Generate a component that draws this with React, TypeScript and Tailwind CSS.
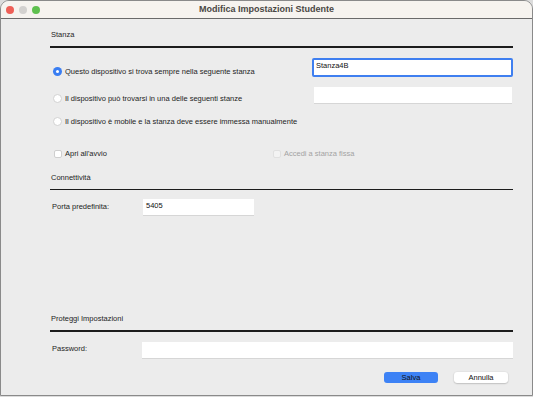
function Radio({ checked }: { checked?: boolean }) {
  return checked ? (
    <span className="flex h-[9px] w-[9px] shrink-0 items-center justify-center rounded-full bg-[#3a7ef2]">
      <span className="h-[3px] w-[3px] rounded-full bg-white" />
    </span>
  ) : (
    <span className="h-[9px] w-[9px] shrink-0 rounded-full border border-[#d2d2d2] bg-white" />
  );
}

function Check({ disabled }: { disabled?: boolean }) {
  return (
    <span
      className={
        disabled
          ? "h-[8px] w-[8px] shrink-0 rounded-[2px] border border-[#e0e0e0] bg-[#f3f3f3]"
          : "h-[8px] w-[8px] shrink-0 rounded-[2px] border border-[#cfcfcf] bg-white"
      }
    />
  );
}

function Section({ title }: { title: string }) {
  return (
    <div>
      <div className="h-[10px] pl-[1px] leading-[10px] text-[#1d1d1d]">{title}</div>
      <div className="mt-[6px] h-[1.5px] bg-[#1c1c1c]" />
    </div>
  );
}

export default function App() {
  return (
    <div
      className="h-[397px] w-[533px] bg-[#dcdcdc] text-[7.5px]"
      style={{ fontFamily: '"Liberation Sans", Arial, sans-serif' }}
    >
      <div className="flex h-[396px] flex-col overflow-hidden rounded-t-[9px] border border-[#8a8a8a]">
        {/* title bar */}
        <div className="relative flex h-[18px] shrink-0 items-center justify-center border-b border-[#6a6a6a] bg-[#f6f3ef]">
          <div className="absolute left-[5px] top-[5px] flex gap-[5px]">
            <span className="h-[8px] w-[8px] rounded-full bg-[#ee5f57]" />
            <span className="h-[8px] w-[8px] rounded-full bg-[#d3d1cf]" />
            <span className="h-[8px] w-[8px] rounded-full bg-[#5fc04f]" />
          </div>
          <span className="text-[9px] font-bold text-[#4a4744]">Modifica Impostazioni Studente</span>
        </div>

        {/* body */}
        <div className="flex flex-1 flex-col bg-[#ececec] pl-[49px] pr-[19px]">
          <div className="mt-[11px]">
            <Section title="Stanza" />
          </div>

          {/* row 1 */}
          <div className="mt-[10px] flex items-start justify-between">
            <div className="mt-[9px] flex h-[10px] items-center gap-[3px] pl-[3px] text-[#1d1d1d]">
              <Radio checked />
              <span>Questo dispositivo si trova sempre nella seguente stanza</span>
            </div>
            <div className="h-[19px] w-[201px] rounded-[2px] border-2 border-[#3f7ff0] bg-white pl-[2px] leading-[12px] text-[#111]">
              Stanza4B
            </div>
          </div>

          {/* row 2 */}
          <div className="mt-[10px] flex items-start justify-between">
            <div className="mt-[7px] flex h-[10px] items-center gap-[3px] pl-[3px] text-[#1d1d1d]">
              <Radio />
              <span>Il dispositivo può trovarsi in una delle seguenti stanze</span>
            </div>
            <div className="mr-[1px] h-[16px] w-[198px] bg-white shadow-[0_1px_0_#d6d6d6]" />
          </div>

          {/* row 3 */}
          <div className="mt-[13px] flex h-[10px] items-center gap-[3px] pl-[3px] text-[#1d1d1d]">
            <Radio />
            <span>Il dispositivo è mobile e la stanza deve essere immessa manualmente</span>
          </div>

          {/* checkboxes */}
          <div className="mt-[22px] flex h-[10px] items-center pl-[4px]">
            <div className="flex w-[219px] items-center gap-[3px] text-[#1d1d1d]">
              <Check />
              <span>Apri all'avvio</span>
            </div>
            <div className="flex items-center gap-[3px] text-[#a3a3a3]">
              <Check disabled />
              <span>Accedi a stanza fissa</span>
            </div>
          </div>

          <div className="mt-[14px]">
            <Section title="Connettività" />
          </div>

          <div className="mt-[9px] flex h-[16px] items-center">
            <span className="w-[93px] pl-[2px] text-[#1d1d1d]">Porta predefinita:</span>
            <div className="h-[16px] w-[111px] bg-white pl-[3px] pt-[1px] text-[#111] shadow-[0_1px_0_#d6d6d6]">5405</div>
          </div>

          <div className="mt-[99px]">
            <Section title="Proteggi Impostazioni" />
          </div>

          <div className="mt-[10px] flex items-start">
            <span className="mt-[1px] w-[92px] pl-[2px] text-[#1d1d1d]">Password:</span>
            <div className="h-[16px] flex-1 bg-white shadow-[0_1px_0_#d6d6d6]" />
          </div>

          <div className="mt-[14px] flex justify-end gap-[16px] pr-[5px]">
            <button className="h-[11px] w-[54px] rounded-[3px] bg-[#3d82f5] text-[7.5px] leading-[11px] text-[#111]">
              Salva
            </button>
            <button className="h-[11px] w-[54px] rounded-[3px] bg-white text-[7.5px] leading-[11px] text-[#111] shadow-[0_0.5px_1.5px_rgba(0,0,0,0.3)]">
              Annulla
            </button>
          </div>
        </div>
      </div>
    </div>
  );
}
